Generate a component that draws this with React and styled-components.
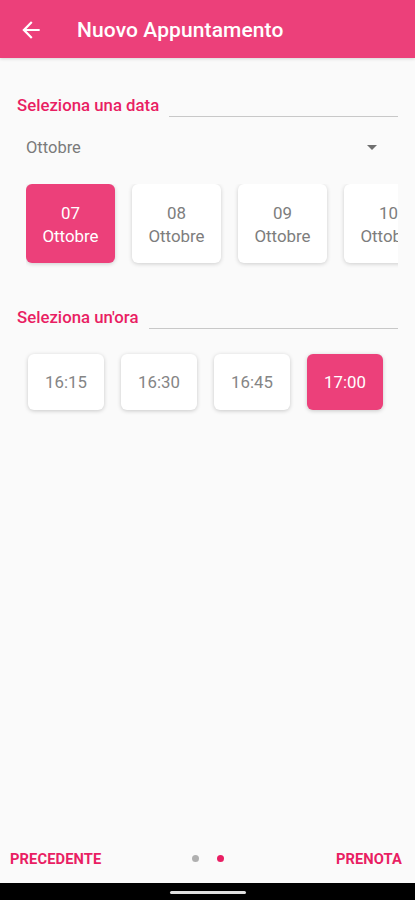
import styled, { createGlobalStyle } from 'styled-components';

const GlobalStyle = createGlobalStyle`
  body {
    margin: 0;
    background: #fafafa;
    font-family: Roboto, "Noto Sans", sans-serif;
  }
`;

const Page = styled.div`
  width: 415px;
  height: 900px;
  display: flex;
  flex-direction: column;
  background: #fafafa;
  overflow: hidden;
`;

const AppBar = styled.header`
  height: 58px;
  flex-shrink: 0;
  background: #ec407a;
  display: flex;
  align-items: center;
  padding: 2px 0 0 18px;
  box-sizing: border-box;
  gap: 33px;
  box-shadow: 0 1px 3px rgba(0, 0, 0, 0.15);
`;

const Title = styled.h1`
  margin: 0;
  color: #fff;
  font-size: 21px;
  font-weight: 500;
  letter-spacing: 0.1px;
`;

const Content = styled.main`
  flex: 1;
  padding: 37px 17px 0 17px;
`;

const SectionHead = styled.div`
  display: flex;
  align-items: flex-end;
  gap: 10px;
  margin-top: ${(p) => p.$top || 0}px;
`;

const Label = styled.span`
  color: #e91e63;
  font-size: 16.8px;
  font-weight: 500;
  line-height: 20px;
`;

const Rule = styled.div`
  flex: 1;
  height: 1px;
  background: #c8c8c8;
  margin-bottom: -2px;
`;

const Dropdown = styled.div`
  display: flex;
  align-items: center;
  justify-content: space-between;
  margin: 22px 21px 0 9px;
  height: 20px;
  color: #7a7a7a;
  font-size: 16.5px;
`;

const Caret = styled.span`
  width: 0;
  height: 0;
  border-left: 5px solid transparent;
  border-right: 5px solid transparent;
  border-top: 5px solid #6f6f6f;
`;

const Scroller = styled.div`
  display: flex;
  gap: 17px;
  overflow: hidden;
  margin: 27px 0 0 9px;
  padding: 0 0 8px 0;
`;

const DateCard = styled.div`
  flex-shrink: 0;
  width: 89px;
  height: 79px;
  border-radius: 6px;
  background: ${(p) => (p.$active ? '#ec407a' : '#fff')};
  color: ${(p) => (p.$active ? '#fff' : '#7d7d7d')};
  box-shadow: 0 1px 4px rgba(0, 0, 0, 0.18);
  display: flex;
  flex-direction: column;
  align-items: center;
  justify-content: center;
  font-size: 16.9px;
  line-height: 23px;
  padding-top: 2px;
  box-sizing: border-box;
`;

const TimeRow = styled.div`
  display: flex;
  gap: 17px;
  margin: 27px 0 0 11px;
`;

const TimeCard = styled.div`
  width: 76px;
  height: 56px;
  border-radius: 6px;
  background: ${(p) => (p.$active ? '#ec407a' : '#fff')};
  color: ${(p) => (p.$active ? '#fff' : '#858585')};
  box-shadow: 0 1px 4px rgba(0, 0, 0, 0.2);
  display: flex;
  align-items: center;
  justify-content: center;
  font-size: 16.8px;
`;

const Footer = styled.footer`
  height: 50px;
  flex-shrink: 0;
  display: flex;
  align-items: center;
  justify-content: space-between;
  padding: 2px 13px 0 10px;
  box-sizing: border-box;
  position: relative;
`;

const NavButton = styled.span`
  color: #e91e63;
  font-size: 14.7px;
  font-weight: 700;
  letter-spacing: 0.1px;
`;

const Dots = styled.div`
  display: flex;
  gap: 18px;
  position: absolute;
  left: 192px;
  top: 22px;
`;

const Dot = styled.span`
  width: 7px;
  height: 7px;
  border-radius: 50%;
  background: ${(p) => (p.$active ? '#e91e63' : '#b0b0b0')};
`;

const SystemBar = styled.div`
  height: 17px;
  flex-shrink: 0;
  background: #000;
  display: flex;
  justify-content: center;
  padding-top: 8px;
  box-sizing: border-box;
`;

const HomePill = styled.span`
  width: 76px;
  height: 3px;
  border-radius: 2px;
  background: #e0e0e0;
`;

const dates = ['07', '08', '09', '10'];
const times = ['16:15', '16:30', '16:45', '17:00'];

export default function App() {
  return (
    <Page>
      <GlobalStyle />
      <AppBar>
        <svg width="26" height="26" viewBox="0 0 24 24">
          <path d="M20 11H7.83l5.59-5.59L12 4l-8 8 8 8 1.41-1.41L7.83 13H20v-2z" fill="#fff" />
        </svg>
        <Title>Nuovo Appuntamento</Title>
      </AppBar>
      <Content>
        <SectionHead>
          <Label>Seleziona una data</Label>
          <Rule />
        </SectionHead>
        <Dropdown>
          <span>Ottobre</span>
          <Caret />
        </Dropdown>
        <Scroller>
          {dates.map((d, i) => (
            <DateCard key={d} $active={i === 0}>
              <span>{d}</span>
              <span>Ottobre</span>
            </DateCard>
          ))}
        </Scroller>
        <SectionHead $top={36}>
          <Label>Seleziona un'ora</Label>
          <Rule />
        </SectionHead>
        <TimeRow>
          {times.map((t, i) => (
            <TimeCard key={t} $active={i === 3}>
              {t}
            </TimeCard>
          ))}
        </TimeRow>
      </Content>
      <Footer>
        <NavButton>PRECEDENTE</NavButton>
        <Dots>
          <Dot />
          <Dot $active />
        </Dots>
        <NavButton>PRENOTA</NavButton>
      </Footer>
      <SystemBar>
        <HomePill />
      </SystemBar>
    </Page>
  );
}
